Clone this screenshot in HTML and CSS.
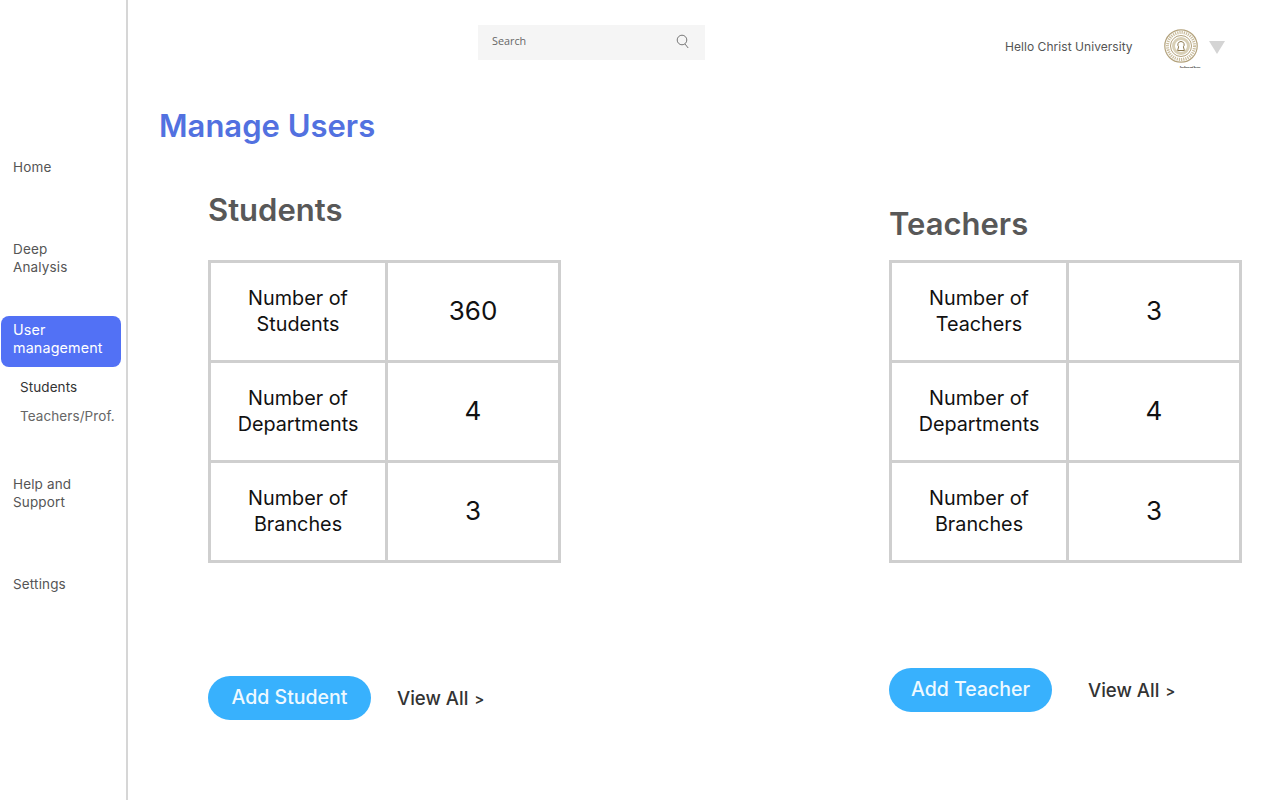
FILE: index.html
```html
<!DOCTYPE html>
<html lang="en">

<head>
  <meta charset="UTF-8" />
  <meta name="viewport" content="width=device-width, initial-scale=1.0" />
  <title>Manage Users</title>
  <link rel="stylesheet" href="styles.css">
</head>

<body>
  <nav class="sidebar">
    <a class="nav-item nav-home" href="#">Home</a>
    <a class="nav-item nav-deep" href="#">Deep<br>Analysis</a>
    <a class="nav-item nav-active" href="#">User<br>management</a>
    <a class="nav-sub nav-sub-current" href="#">Students</a>
    <a class="nav-sub" href="#">Teachers/Prof.</a>
    <a class="nav-item nav-help" href="#">Help and<br>Support</a>
    <a class="nav-item nav-settings" href="#">Settings</a>
  </nav>

  <div class="content">
    <header class="topbar">
      <div class="search">
        <span class="search-label">Search</span>
        <svg class="search-icon" width="14" height="15" viewBox="0 0 14 15" fill="none" stroke="#777" stroke-width="1">
          <circle cx="6" cy="6" r="4.8" />
          <path d="M9 10l3.2 4" />
        </svg>
      </div>
      <div class="user">
        <span class="user-name">Hello Christ University</span>
        <div class="logo">
          <svg width="34" height="34" viewBox="0 0 34 34" fill="none" stroke="#b3a27c">
            <circle cx="17" cy="17" r="16.2" stroke-width="1.2" />
            <circle cx="17" cy="17" r="13.5" stroke-width="3" stroke-dasharray="1.2 1" stroke="#c9bc9c" />
            <circle cx="17" cy="17" r="10.5" stroke-width="1" />
            <circle cx="17" cy="17" r="7.5" stroke-width="3" stroke="#d8cfb6" />
            <path d="M17 12.5a3.2 3.2 0 0 1 2.4 5.3l1 3.7h-6.8l1-3.7a3.2 3.2 0 0 1 2.4-5.3z" fill="#fff" stroke="#8d7a50" stroke-width="1" />
          </svg>
          <span class="logo-caption">Excellence and Service</span>
        </div>
        <span class="caret"></span>
      </div>
    </header>

    <h1 class="page-title">Manage Users</h1>

    <div class="panels">
      <section class="panel panel-students">
        <h2 class="panel-title">Students</h2>
        <div class="stats">
          <div class="stat-label">Number of Students</div>
          <div class="stat-value">360</div>
          <div class="stat-label">Number of Departments</div>
          <div class="stat-value">4</div>
          <div class="stat-label">Number of Branches</div>
          <div class="stat-value">3</div>
        </div>
        <div class="actions">
          <a class="btn" href="#">Add Student</a>
          <a class="view-all" href="#">View All <span class="chevron">&gt;</span></a>
        </div>
      </section>

      <section class="panel panel-teachers">
        <h2 class="panel-title">Teachers</h2>
        <div class="stats">
          <div class="stat-label">Number of Teachers</div>
          <div class="stat-value">3</div>
          <div class="stat-label">Number of Departments</div>
          <div class="stat-value">4</div>
          <div class="stat-label">Number of Branches</div>
          <div class="stat-value">3</div>
        </div>
        <div class="actions">
          <a class="btn" href="#">Add Teacher</a>
          <a class="view-all" href="#">View All <span class="chevron">&gt;</span></a>
        </div>
      </section>
    </div>
  </div>
</body>

</html>
```

FILE: styles.css
```css
* {
  box-sizing: border-box;
}

body {
  margin: 0;
  height: 800px;
  display: flex;
  overflow: hidden;
  background: #fff;
  font-family: "Inter", "Liberation Sans", sans-serif;
}

a {
  text-decoration: none;
  color: inherit;
}

.sidebar {
  width: 128px;
  flex: none;
  border-right: 2px solid #d6d6d6;
  padding: 158px 0 0 1px;
  display: flex;
  flex-direction: column;
  align-items: flex-start;
  font-size: 13.5px;
  line-height: 18px;
  letter-spacing: .15px;
  color: #555;
}

.nav-item {
  padding-left: 12px;
}

.nav-deep {
  margin-top: 64px;
}

.nav-active {
  width: 120px;
  margin-top: 40px;
  padding: 5px 0 10px 12px;
  border-radius: 8px;
  background: #5271f5;
  color: #fff;
  font-size: 14.3px;
}

.nav-sub {
  padding-left: 19px;
  margin-top: 11px;
  letter-spacing: .08px;
  color: #666;
}

.nav-sub-current {
  margin-top: 11px;
  color: #333;
}

.nav-help {
  margin-top: 50px;
}

.nav-settings {
  margin-top: 64px;
}

.content {
  flex: 1;
  min-width: 0;
}

.topbar {
  height: 60px;
  padding-top: 25px;
  display: flex;
  justify-content: space-between;
}

.search {
  width: 227px;
  height: 35px;
  margin-left: 350px;
  padding: 0 15px 3px 14px;
  display: flex;
  align-items: center;
  justify-content: space-between;
  background: #f5f5f5;
  font-family: "Open Sans", sans-serif;
  font-size: 10.8px;
  color: #666;
}

.search-label {
  padding-bottom: 1px;
}

.user {
  display: flex;
  align-items: flex-start;
  padding-right: 55px;
  font-size: 12px;
  letter-spacing: .05px;
  color: #555;
}

.user-name {
  margin-top: 14px;
  width: 159px;
}

.logo {
  width: 45px;
  display: flex;
  flex-direction: column;
  margin-top: 4px;
}

.logo svg {
  display: block;
}

.logo-caption {
  width: 20px;
  margin: 2px 0 0 16px;
  font-size: 1.8px;
  font-weight: 700;
  line-height: 4px;
  letter-spacing: 0;
  text-align: center;
  white-space: nowrap;
  color: #000;
}

.caret {
  margin-top: 16px;
  width: 0;
  height: 0;
  border-left: 8px solid transparent;
  border-right: 8px solid transparent;
  border-top: 13px solid #d4d4d4;
}

.page-title {
  margin: 45px 0 0 31px;
  font-size: 31px;
  line-height: 42px;
  font-weight: 600;
  color: #5271e0;
}

.panels {
  display: flex;
  padding-left: 80px;
}

.panel-title {
  margin: 0;
  font-size: 31px;
  line-height: 40px;
  font-weight: 600;
  color: #585858;
}

.panel-students {
  width: 681px;
  padding-top: 43px;
}

.panel-teachers {
  padding-top: 57px;
}

.panel-students .stats {
  margin-top: 30px;
}

.panel-teachers .stats {
  margin-top: 16px;
}

.stats {
  width: 353px;
  display: grid;
  grid-template-columns: 174px 170px;
  grid-auto-rows: 97px;
  gap: 3px;
  padding: 3px;
  background: #cfcfcf;
}

.stat-label,
.stat-value {
  display: flex;
  align-items: center;
  justify-content: center;
  text-align: center;
  background: #fff;
  color: #111;
}

.stat-label {
  padding: 0 25px 2px;
  font-size: 19.8px;
  line-height: 26px;
}

.stat-value {
  padding-bottom: 2px;
  font-size: 26px;
}

.actions {
  display: flex;
  align-items: center;
  gap: 26px;
  font-size: 19px;
}

.panel-students .actions {
  margin-top: 113px;
}

.panel-teachers .actions {
  margin-top: 105px;
  gap: 36px;
}

.btn {
  width: 163px;
  height: 44px;
  padding-bottom: 2px;
  display: flex;
  align-items: center;
  justify-content: center;
  border-radius: 22px;
  background: #38b1fd;
  color: #eef9ff;
  font-size: 19.5px;
  font-weight: 500;
}

.view-all {
  color: #333;
  font-size: 18.6px;
  font-weight: 500;
}

.chevron {
  margin-left: 1px;
  font-size: 14.5px;
  font-weight: 600;
  vertical-align: 1px;
}
```
